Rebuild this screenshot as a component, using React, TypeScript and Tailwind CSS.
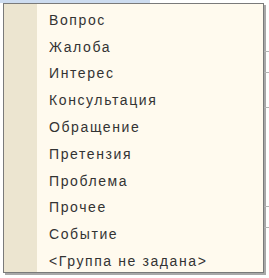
import React from 'react'

const items = [
  'Вопрос',
  'Жалоба',
  'Интерес',
  'Консультация',
  'Обращение',
  'Претензия',
  'Проблема',
  'Прочее',
  'Событие',
  '<Группа не задана>',
]

export default function App() {
  return (
    <div className="w-[269px] h-[278px] bg-white overflow-hidden font-['Liberation_Sans',Arial,sans-serif]">
      {/* strip of the field above the list */}
      <div className="h-[3px] w-[150px] bg-[#cddcf0]" />
      <div className="flex">
        <div className="ml-[3px] w-[261px] h-[270px] border border-[#7a7a7a] bg-[#fffaee] flex shadow-[2px_2px_0_#a8a8a8]">
          <div className="w-[33px] bg-[#ece5d0]" />
          <ul className="flex-1 pt-[3px]">
            {items.map((it) => (
              <li key={it} className="h-[26.8px] flex items-center pl-[12px] text-[14px] tracking-[1.6px] text-[#333]">
                {it}
              </li>
            ))}
          </ul>
        </div>
        {/* edge of the table behind the list */}
        <div className="flex-1 flex flex-col pt-[48px] gap-[20px]">
          <div className="h-px bg-[#b5b5b5]" />
          <div className="h-px bg-[#b5b5b5]" />
          <div className="h-px bg-[#b5b5b5] mt-[14px]" />
          <div className="h-px bg-[#b5b5b5] mt-[78px]" />
          <div className="h-px bg-[#b5b5b5]" />
        </div>
      </div>
    </div>
  )
}
